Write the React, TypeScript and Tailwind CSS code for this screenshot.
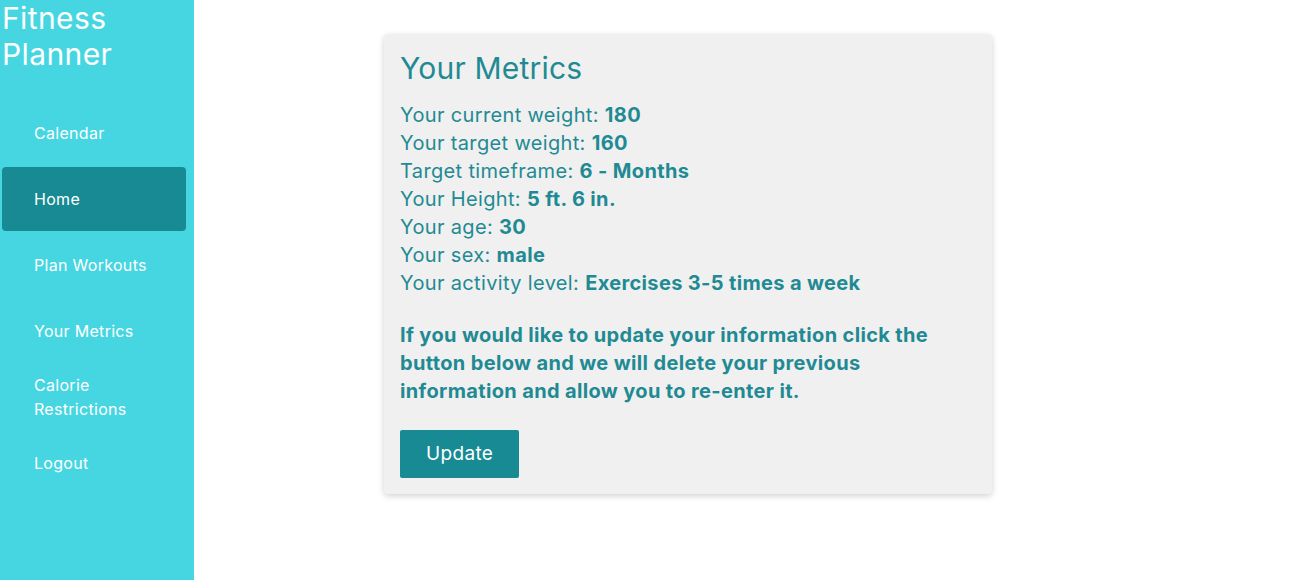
const navItems = ["Calendar", "Home", "Plan Workouts", "Your Metrics", "Calorie Restrictions", "Logout"];

function Sidebar() {
  return (
    <aside className="w-[194px] shrink-0 bg-[#46d6e2] min-h-[580px] text-white">
      <h1 className="pl-[2px] text-[30px] leading-[36px] font-normal tracking-[0.4px]">Fitness Planner</h1>
      <nav className="mt-[29px] flex flex-col gap-[2px]">
        {navItems.map((item) => (
          <a
            key={item}
            className={`ml-[2px] w-[184px] h-[64px] flex items-center pl-[32px] pr-4 rounded text-[16px] leading-[24px] tracking-[0.3px] ${
              item === "Home" ? "bg-[#178a93]" : ""
            }`}
          >
            {item}
          </a>
        ))}
      </nav>
    </aside>
  );
}

function MetricRow({ label, value }: { label: string; value: string }) {
  return (
    <div>
      {label} <span className="font-bold">{value}</span>
    </div>
  );
}

export default function App() {
  return (
    <div className="flex min-h-[580px] bg-white font-['Inter','Noto_Sans',sans-serif]">
      <Sidebar />
      <main className="flex-1">
        <section className="ml-[190px] mt-[34px] w-[608px] rounded bg-[#f0f0f0] px-4 pt-4 pb-4 text-[#1f8a93] tracking-[0.35px] shadow-[0_2px_6px_rgba(0,0,0,0.18)]">
          <h2 className="text-[30px] leading-[36px] font-normal tracking-[0.2px]">Your Metrics</h2>
          <div className="mt-[15px] text-[20px] leading-[28px]">
            <MetricRow label="Your current weight:" value="180" />
            <MetricRow label="Your target weight:" value="160" />
            <MetricRow label="Target timeframe:" value="6 - Months" />
            <MetricRow label="Your Height:" value="5 ft. 6 in." />
            <MetricRow label="Your age:" value="30" />
            <MetricRow label="Your sex:" value="male" />
            <MetricRow label="Your activity level:" value="Exercises 3-5 times a week" />
          </div>
          <p className="mt-[24px] text-[20px] leading-[28px] font-bold">
            If you would like to update your information click the button below and we will delete your previous
            information and allow you to re-enter it.
          </p>
          <button className="mt-[25px] h-[48px] px-[26px] bg-[#178a93] text-white text-[19px] rounded-[2px]">
            Update
          </button>
        </section>
      </main>
    </div>
  );
}
